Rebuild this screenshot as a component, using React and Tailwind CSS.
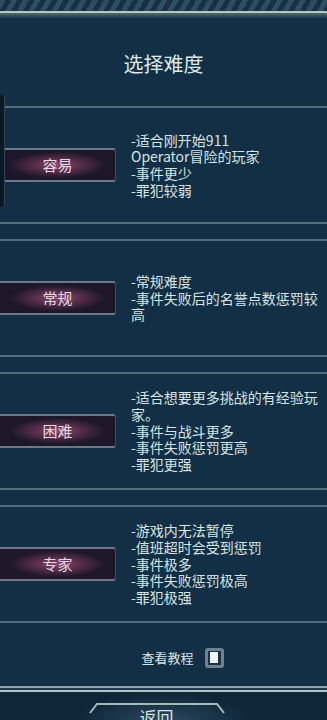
const levels = [
  {
    name: "容易",
    lines: ["-适合刚开始911", "Operator冒险的玩家", "-事件更少", "-罪犯较弱"],
  },
  {
    name: "常规",
    lines: ["-常规难度", "-事件失败后的名誉点数惩罚较", "高"],
  },
  {
    name: "困难",
    lines: [
      "-适合想要更多挑战的有经验玩",
      "家。",
      "-事件与战斗更多",
      "-事件失败惩罚更高",
      "-罪犯更强",
    ],
  },
  {
    name: "专家",
    lines: [
      "-游戏内无法暂停",
      "-值班超时会受到惩罚",
      "-事件极多",
      "-事件失败惩罚极高",
      "-罪犯极强",
    ],
  },
];

const LevelRow = ({ level, first }) => {
  return (
    <div
      className={`flex h-[118px] items-center border-y-2 border-[#4f6f79] ${
        first ? "" : "mt-[15px]"
      }`}
    >
      {/* Difficulty button */}
      <button className="flex h-[34px] w-[116px] shrink-0 items-center justify-center rounded-r-[3px] border-y-2 border-r border-[#6d7989] border-r-[#434a5c] bg-[radial-gradient(ellipse_48px_13px_at_50%_50%,#8d4b6a_0%,#5a2f4c_45%,#1d1729_100%)] text-[15px] text-[#e4dbe3]">
        {level.name}
      </button>

      {/* Description */}
      <div className="ml-[15px] flex flex-col text-[14px] leading-[16.75px] text-[#d8e5e4]">
        {level.lines.map((line, i) => (
          <span key={i} className="whitespace-nowrap">
            {line}
          </span>
        ))}
      </div>
    </div>
  );
};

const App = () => {
  return (
    <div className="relative h-[720px] w-[327px] overflow-hidden bg-[#132f45] font-['Noto_Sans_CJK_SC','Noto_Sans',sans-serif]">
      {/* Hatched top strip */}
      <div className="h-[11px] bg-[repeating-linear-gradient(120deg,#2e4d62_0px,#2e4d62_5px,#173046_5px,#173046_10px)]" />
      <div className="h-[2px] bg-[#b4c7bf]" />
      <div className="h-[5px] bg-gradient-to-b from-[#4f6d6c] to-[#1a3a4e]" />

      {/* Title */}
      <div className="flex h-[88px] items-center justify-center pt-[4px]">
        <h1 className="text-[20px] text-[#dde9e7]">选择难度</h1>
      </div>

      {/* Difficulty list */}
      <div>
        {levels.map((level, i) => (
          <LevelRow key={level.name} level={level} first={i === 0} />
        ))}
      </div>

      {/* Tutorial toggle */}
      <div className="flex h-[63px] items-center justify-center pl-[38px] pt-[6px]">
        <span className="text-[13px] text-[#d8e5e4]">查看教程</span>
        <div className="ml-[11px] flex h-[20px] w-[19px] items-center justify-center rounded-[3px] border-[3px] border-[#6f8290] bg-[#1b3345]">
          <div className="h-[11px] w-[8px] bg-[#eef4fb]" />
        </div>
      </div>

      {/* Bottom bar */}
      <div className="h-[2px] bg-[#8fa5a4]" />
      <div className="h-[2px] bg-[#1c3a4c]" />
      <div className="h-[2px] bg-[#b2c3bf]" />
      <div className="flex h-[30px] justify-center bg-[radial-gradient(ellipse_90px_30px_at_50%_100%,#2a4a60_0%,#0f2538_100%)]">
        <div className="relative mt-[11px] h-[30px] w-[136px] -translate-x-[7px]">
          <svg
            className="absolute inset-0"
            width="136"
            height="30"
            viewBox="0 0 136 30"
          >
            <polyline
              points="1,10 8,1 128,1 135,10"
              fill="none"
              stroke="#a6b8b8"
              strokeWidth="2"
            />
          </svg>
          <span className="absolute left-0 right-0 top-[4px] text-center text-[17px] leading-[20px] text-[#d8e3e2]">
            返回
          </span>
        </div>
      </div>

      {/* Left scroll handle */}
      <div className="absolute left-0 top-[95px] h-[112px] w-[5px] rounded-r-[3px] border-r border-[#2d4656] bg-[#0b1925]" />
    </div>
  );
};

export default App;
